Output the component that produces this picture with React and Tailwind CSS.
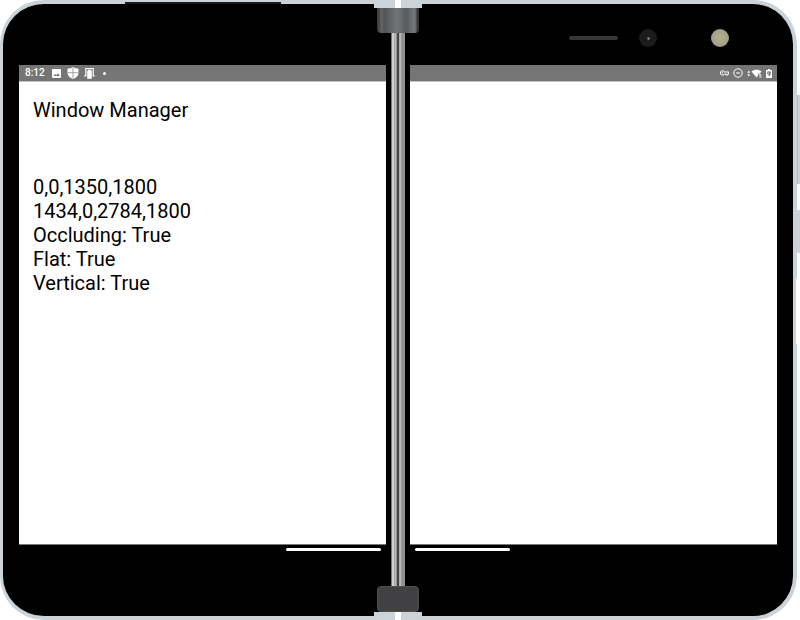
import React from "react";

function StatusLeft() {
  return (
    <div className="flex h-4 items-center bg-[#757575] pl-1.5 text-white">
      <span className="w-5 text-[10px] font-medium leading-4">8:12</span>
      <svg className="ml-[7px] h-[9px] w-[9px]" viewBox="0 0 9 9" aria-hidden="true">
        <rect width="9" height="9" rx="1" fill="#fff" />
        <path d="M1.500 7 3.200 5l1.200 1.200L6 4.300 7.700 7z" fill="#757575" />
      </svg>
      <svg className="ml-1.5 h-3 w-3" viewBox="0 0 12 12" aria-hidden="true">
        <path d="M6 0C4.500 1.200 2.500 1.700.500 1.700V6c0 3 2.500 5 5.500 6 3-1 5.500-3 5.500-6V1.700C9.500 1.700 7.500 1.200 6 0z" fill="#fff" />
        <path d="M6 .5v11M.5 5.700h11" stroke="#999" strokeWidth=".9" />
      </svg>
      <svg className="ml-[5px] h-3 w-[11px]" viewBox="0 0 11 12" aria-hidden="true">
        <path d="M0 9h1.800V1.500h7.400V9H11" fill="none" stroke="#fff" strokeWidth="1.200" />
        <path d="M3.200 3.500h1V2.500h2.600v1h1v8.200H3.200z" fill="#fff" />
      </svg>
      <span className="ml-2 h-[3px] w-[3px] rounded-full bg-white" />
    </div>
  );
}

function StatusRight() {
  return (
    <div className="flex h-4 items-center justify-end bg-[#757575] pr-[5px]">
      <svg className="h-[6px] w-[9px]" viewBox="0 0 9 6" fill="none" stroke="#fff" aria-hidden="true">
        <path d="M4.400 2C3.900 1 3.300.8 2.600.8a2.200 2.200 0 0 0 0 4.400c.7 0 1.300-.2 1.800-1.200h1.400v1h1.900V4h.8V2z" strokeWidth="1" />
        <circle cx="2.600" cy="3" r=".7" fill="#fff" stroke="none" />
      </svg>
      <svg className="ml-1 h-[10px] w-[10px]" viewBox="0 0 10 10" fill="none" stroke="#fff" aria-hidden="true">
        <circle cx="5" cy="5" r="4.200" strokeWidth="1" />
        <path d="M3 5h4" strokeWidth="1" />
      </svg>
      <svg className="ml-1 h-[9px] w-[15px]" viewBox="0 0 15 9" fill="#fff" aria-hidden="true">
        <path d="M.2 3.800 1.700 1.500l1.500 2.300zM.2 5.200h3L1.700 7.500z" />
        <path d="M4.500 2.500C7.300.3 11.700.3 14.500 2.500L12.700 4.800h-1.500v1.800L9.500 8.500z" />
        <path d="M14.200 5.500h-1.700v1.200h1.500V8.200h-1.700" fill="none" stroke="#fff" strokeWidth=".7" />
      </svg>
      <svg className="ml-1 h-[9px] w-[6px]" viewBox="0 0 6 9" aria-hidden="true">
        <path d="M2 0h2v1h2v8H0V1h2z" fill="#fff" />
        <path d="M1.300 2.600h3.400v2.200L3.500 7.300h-.8V5.200H1.300z" fill="#666" />
        <path d="M2.300 3.400h1.200v1H2.300z" fill="#fff" />
      </svg>
    </div>
  );
}

function Hinge() {
  return (
    <div className="absolute inset-y-0 left-1/2 flex w-12 -translate-x-1/2 flex-col items-center">
      <div className="flex h-2 w-full shrink-0 justify-center bg-[#ccd4da]">
        <div className="w-[6px] bg-white" />
      </div>
      <div className="h-[25px] w-[42px] shrink-0 rounded-b-sm bg-[linear-gradient(90deg,#3b3b3c_0%,#4b4b4c_6%,#646566_10%,#535455_18%,#747577_48%,#58595a_70%,#707173_84%,#77787a_90%,#3b3b3c_96%,#303030_100%)]" />
      <div className="w-[14px] flex-1 bg-[linear-gradient(90deg,#777_0px,#777_1px,#cfcfcf_1px,#cfcfcf_3px,#999_3px,#bdbdbd_4px,#b0b0b0_5px,#777_6px,#444547_6px,#444547_8px,#999_8px,#c4c4c4_9px,#aaa_10px,#8c8e8e_11px,#949696_14px)]" />
      <div className="h-[26px] w-[42px] shrink-0 rounded-sm border border-[#505052] bg-[#414143]" />
      <div className="flex h-2 w-full shrink-0 justify-center bg-[#ccd4da]">
        <div className="w-[6px] bg-white" />
      </div>
    </div>
  );
}

export default function App() {
  return (
    <div className="relative flex h-screen overflow-hidden bg-white font-[Roboto,sans-serif] text-black">
      <div className="relative flex min-w-0 flex-1 gap-6 rounded-[44px] border-y-4 border-l-[3px] border-r-4 border-[#ccd3d8] bg-black px-4">
        <div className="absolute -top-[2px] left-[122px] h-[2px] w-[156px] bg-[#171c21]" />
        <div className="absolute -right-1 top-[274px] h-[66px] w-px rounded-full bg-white" />

        <section className="flex min-w-0 flex-1 flex-col">
          <div className="h-[61px] shrink-0" />
          <div className="flex flex-1 flex-col border-b border-[#777] bg-white">
            <StatusLeft />
            <main className="flex flex-col gap-[53px] border-t border-[#c4c4c4] px-[14px] pt-4 text-xl leading-6">
              <h1>Window Manager</h1>
              <div>
                <p>0,0,1350,1800</p>
                <p>1434,0,2784,1800</p>
                <p>Occluding: True</p>
                <p>Flat: True</p>
                <p>Vertical: True</p>
              </div>
            </main>
          </div>
          <div className="flex h-[71px] shrink-0 justify-end pr-[5px] pt-[3px]">
            <div className="h-[3px] w-[95px] rounded-full bg-white" />
          </div>
        </section>

        <section className="flex min-w-0 flex-1 flex-col">
          <div className="flex h-[61px] shrink-0 items-center justify-end pr-12 pt-[7px]">
            <div className="h-1 w-[49px] rounded-full bg-[#363636]" />
            <div className="ml-[21px] flex h-[18px] w-[18px] items-center justify-center rounded-full bg-[#1c1c1c]">
              <div className="h-[3px] w-[3px] rounded-full bg-[radial-gradient(circle,#999,#403c40)]" />
            </div>
            <div className="ml-[54px] h-[18px] w-[18px] rounded-full bg-[radial-gradient(circle,#b6b184_0%,#a5a38c_50%,#929292_100%)]" />
          </div>
          <div className="flex flex-1 flex-col border-b border-[#777] bg-white">
            <StatusRight />
            <div className="h-px bg-[#c4c4c4]" />
          </div>
          <div className="flex h-[71px] shrink-0 pl-[5px] pt-[3px]">
            <div className="h-[3px] w-[95px] rounded-full bg-white" />
          </div>
        </section>
      </div>

      <div className="flex w-[3px] shrink-0 flex-col gap-[26px] pt-[95px]">
        <div className="h-[89px] border-l border-[#b4bcc3] bg-[#ccd4da]" />
        <div className="h-[43px] bg-[#ccd4da]" />
      </div>

      <div className="pointer-events-none absolute inset-y-0 left-0 right-1">
        <Hinge />
      </div>
    </div>
  );
}
